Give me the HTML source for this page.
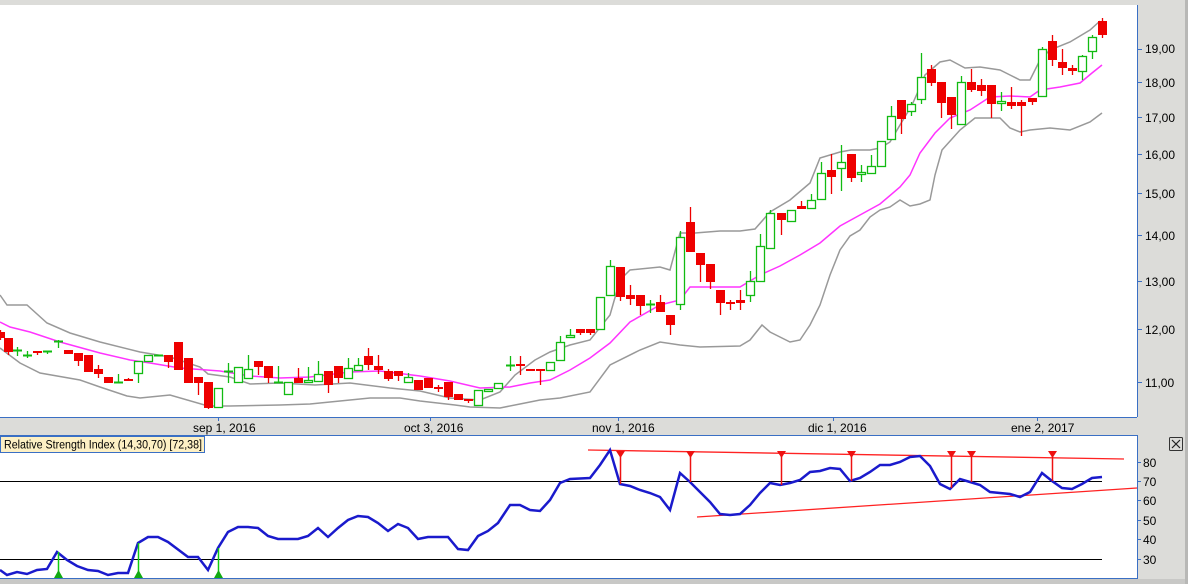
<!DOCTYPE html>
<html><head><meta charset="utf-8"><style>
html,body{margin:0;padding:0;background:#dcdcd9;}
body{width:1188px;height:584px;overflow:hidden;position:relative;font-family:"Liberation Sans",sans-serif;}
svg{position:absolute;left:0;top:0;}
text{font-family:"Liberation Sans",sans-serif;font-size:12px;fill:#000;}
</style></head><body>
<svg id="s" width="1188" height="584" xmlns="http://www.w3.org/2000/svg">
<rect x="0" y="0" width="1188" height="584" fill="#dcdcd9"/>
<rect x="1185" y="0" width="3" height="584" fill="#b8b8b6"/>
<rect x="0" y="5" width="1137" height="412" fill="#fff"/>
<line x1="1137.5" y1="5" x2="1137.5" y2="417" stroke="#3a6fc4"/>
<line x1="0" y1="417.5" x2="1137" y2="417.5" stroke="#3a6fc4"/>
<rect x="0" y="436" width="1137" height="142" fill="#fff"/>
<rect x="-1" y="435.5" width="1138.5" height="143" fill="none" stroke="#3a6fc4"/>
<rect x="0" y="579" width="1185" height="5" fill="#c8c8c6"/>
<g id="g"></g>
<g font-size="12">
<text x="1145" y="53">19,00</text><text x="1145" y="87">18,00</text><text x="1145" y="122">17,00</text><text x="1145" y="159">16,00</text><text x="1145" y="198">15,00</text><text x="1145" y="240">14,00</text><text x="1145" y="286">13,00</text><text x="1145" y="334">12,00</text><text x="1145" y="387">11,00</text>
<text x="193" y="432">sep 1, 2016</text><text x="404" y="432">oct 3, 2016</text><text x="592" y="432">nov 1, 2016</text><text x="808" y="432">dic 1, 2016</text><text x="1011" y="432">ene 2, 2017</text>
<text x="1143" y="467">80</text><text x="1143" y="486">70</text><text x="1143" y="505">60</text><text x="1143" y="525">50</text><text x="1143" y="544">40</text><text x="1143" y="564">30</text>
</g>
<rect x="0.5" y="436.5" width="204" height="16" fill="#fdf0c4" stroke="#3a6fc4"/>
<text x="4" y="448.5" font-size="11.5" textLength="198" lengthAdjust="spacingAndGlyphs" style="font-size:11.5px">Relative Strength Index (14,30,70) [72,38]</text>
<rect x="1169.5" y="437.5" width="13" height="13" fill="#dcdcd9" stroke="#333" rx="1"/>
<path d="M1172 440 L1180 448 M1180 440 L1172 448" stroke="#222" stroke-width="1.2"/>
</svg>
<script>
var g=document.getElementById('g'),NS='http://www.w3.org/2000/svg';
function el(t,a){var e=document.createElementNS(NS,t);for(var k in a)e.setAttribute(k,a[k]);g.appendChild(e);return e;}
function pl(p,c,w){el('polyline',{points:p.map(function(q){return q.join(',')}).join(' '),fill:'none',stroke:c,'stroke-width':w});}
[[218],[430],[618],[833],[1037]].forEach(function(t){el('line',{x1:t[0]+.5,y1:417,x2:t[0]+.5,y2:421,stroke:'#3a6fc4'})});
[49,82,117,154,193,235,281,329,382].forEach(function(y){el('line',{x1:1137,y1:y+.5,x2:1142,y2:y+.5,stroke:'#3a6fc4'})});
[462,481,500,520,539,559].forEach(function(y){el('line',{x1:1137,y1:y+.5,x2:1141,y2:y+.5,stroke:'#3a6fc4'})});
pl([[0,295],[7,305],[27,305],[47,323],[70,333],[100,342],[140,352],[170,357],[200,367],[208,374],[230,377],[250,384],[280,383],[315,385],[350,383],[390,388],[420,391],[450,398],[480,400],[500,392],[515,375],[535,360],[550,352],[570,345],[590,340],[610,315],[620,280],[630,270],[660,267],[670,270],[680,233],[695,233],[720,231],[740,231],[755,229],[770,212],[790,200],[810,183],[820,158],[840,152],[851,150],[870,150],[880,148],[890,142],[900,125],[912,105],[920,87],[925,75],[940,62],[950,60],[965,68],[980,67],[1000,70],[1010,75],[1020,80],[1030,80],[1040,60],[1050,50],[1070,42],[1090,30],[1100,21]],'#999',1.5);
pl([[0,348],[20,363],[40,373],[80,380],[100,387],[127,396],[140,398],[170,395],[208,406],[230,406],[280,405],[310,404],[340,401],[370,398],[400,398],[420,401],[455,405],[470,407],[500,408],[520,404],[540,400],[560,398],[590,392],[610,365],[640,350],[660,342],[680,345],[700,347],[740,346],[750,340],[762,325],[770,332],[790,342],[800,340],[810,325],[820,305],[830,275],[840,250],[850,236],[860,230],[870,217],[880,210],[890,207],[900,200],[910,206],[920,204],[930,200],[935,175],[942,150],[960,130],[975,118],[1000,118],[1010,128],[1020,132],[1030,130],[1050,128],[1070,130],[1090,122],[1102,113]],'#999',1.5);
pl([[0,322],[10,327],[30,332],[60,342],[100,353],[130,360],[150,363],[180,368],[220,371],[250,376],[280,378],[310,377],[350,372],[380,371],[420,376],[450,381],[480,388],[510,387],[530,383],[550,380],[570,370],[590,358],[610,343],[630,322],[660,305],[680,300],[690,287],[740,287],[760,275],[780,266],[800,255],[820,243],[840,226],[860,215],[880,204],[900,187],[910,175],[920,153],[935,133],[950,118],[970,110],[990,97],[1010,96],[1030,97],[1040,90],[1060,87],[1080,83],[1092,73],[1102,65]],'#ff33ff',1.5);
var C=[[0,332,338,330,340,'r'],[8,338,352,338,355,'r'],[17,350,351,347,356,'d'],[27,355,356,351,358,'d'],[37,351,353,351,355,'r'],[47,351,352,351,354,'d'],[58,341,342,340,348,'d'],[68,350,354,350,354,'r'],[78,353,361,353,366,'r'],[88,355,372,355,372,'r'],[98,369,374,365,378,'r'],[108,377,383,377,383,'r'],[118,382,383,374,383,'d'],[128,379,381,378,381,'r'],[138,361,373,361,383,'g'],[148,355,361,355,361,'g'],[158,355,356,355,356,'d'],[168,355,362,355,368,'r'],[178,342,370,342,370,'r'],[188,358,383,358,383,'r'],[198,377,383,377,395,'r'],[208,382,408,382,409,'r'],[218,388,407,388,407,'g'],[228,371,372,363,383,'d'],[238,367,382,367,382,'g'],[248,369,378,355,378,'g'],[258,361,367,361,375,'r'],[268,366,378,366,383,'r'],[278,382,383,366,383,'d'],[288,382,394,382,394,'g'],[298,378,383,368,383,'r'],[308,380,382,367,382,'g'],[318,374,381,361,381,'g'],[328,371,385,371,393,'r'],[338,366,378,366,383,'r'],[348,368,378,358,378,'g'],[358,365,370,358,370,'g'],[368,356,365,348,370,'r'],[378,366,370,355,374,'r'],[388,371,379,369,381,'r'],[398,371,376,371,381,'r'],[408,377,382,373,382,'g'],[418,380,390,380,390,'r'],[428,378,388,378,388,'r'],[438,387,389,385,392,'r'],[448,382,397,382,400,'r'],[458,394,400,394,400,'r'],[468,399,401,399,403,'r'],[478,390,405,390,405,'g'],[488,389,391,389,391,'g'],[498,383,388,383,388,'g'],[510,365,366,356,371,'d'],[520,364,366,356,375,'r'],[530,369,370,369,370,'r'],[540,369,371,369,385,'r'],[550,362,370,362,370,'g'],[560,342,360,336,360,'g'],[570,335,337,329,337,'g'],[580,329,333,329,335,'r'],[590,329,333,329,335,'r'],[600,297,329,297,329,'g'],[610,266,295,260,295,'g'],[620,267,297,267,301,'r'],[630,295,299,285,305,'r'],[640,295,306,295,315,'r'],[650,304,305,300,313,'d'],[660,302,312,295,312,'r'],[670,315,325,315,335,'r'],[680,237,304,231,310,'g'],[690,222,252,207,252,'r'],[700,253,265,253,282,'r'],[710,264,282,264,289,'r'],[720,290,303,290,315,'r'],[730,302,304,300,310,'r'],[740,300,303,290,310,'r'],[750,281,295,271,302,'g'],[760,246,281,234,281,'g'],[770,213,248,210,248,'g'],[781,213,220,213,235,'r'],[791,210,221,210,221,'g'],[801,206,209,201,209,'r'],[811,200,208,194,208,'g'],[821,173,199,162,199,'g'],[831,170,177,154,194,'r'],[841,162,168,145,191,'g'],[851,154,178,154,182,'r'],[861,172,174,165,182,'g'],[871,166,173,155,173,'g'],[881,141,166,141,166,'g'],[891,116,139,106,139,'g'],[901,100,119,100,134,'r'],[911,104,111,102,116,'g'],[921,77,99,53,104,'g'],[931,69,83,65,86,'r'],[941,82,103,82,118,'r'],[951,97,115,97,129,'r'],[961,82,124,76,124,'g'],[971,82,90,69,92,'r'],[981,85,91,79,96,'r'],[991,85,104,85,118,'r'],[1001,101,103,92,111,'g'],[1011,102,106,87,109,'r'],[1021,102,106,100,136,'r'],[1032,98,102,98,105,'r'],[1042,49,96,47,96,'g'],[1052,41,60,35,66,'r'],[1062,62,68,49,75,'r'],[1072,68,71,65,75,'r'],[1082,56,71,55,80,'g'],[1092,37,51,35,59,'g'],[1102,21,35,18,38,'r']];
C.forEach(function(c){var x=c[0],t=c[5];var col=t=='r'?'#ee0000':'#11bb11';
el('line',{x1:x+.5,y1:c[3],x2:x+.5,y2:c[4],stroke:col,'stroke-width':1.3});
if(t=='r')el('rect',{x:x-4,y:c[1],width:9,height:Math.max(2,c[2]-c[1]),fill:col});
else if(t=='g')el('rect',{x:x-3.5,y:c[1]+.5,width:8,height:Math.max(1,c[2]-c[1]),fill:'#fff',stroke:col,'stroke-width':1.3});
else el('line',{x1:x-4,y1:c[1]+.5,x2:x+5,y2:c[1]+.5,stroke:col,'stroke-width':2});});
el('line',{x1:0,y1:481.5,x2:1102,y2:481.5,stroke:'#000'});
el('line',{x1:0,y1:559.5,x2:1102,y2:559.5,stroke:'#000'});
el('line',{x1:588,y1:450,x2:1124,y2:459,stroke:'#f22','stroke-width':1.3});
el('line',{x1:697,y1:517,x2:1137,y2:488,stroke:'#f22','stroke-width':1.3});
var R=[[0,570],[7,575],[17,572],[27,574],[37,570],[47,569],[57,552],[67,560],[77,566],[88,570],[98,571],[108,575],[118,573],[128,573],[138,543],[148,537],[158,537],[168,542],[188,557],[198,557],[208,570],[218,548],[228,532],[238,527],[248,527],[258,528],[268,536],[278,539],[298,539],[308,536],[318,528],[328,537],[338,528],[348,520],[358,516],[368,517],[378,523],[388,531],[398,524],[408,528],[418,539],[428,537],[448,537],[458,549],[468,550],[478,536],[488,531],[498,523],[510,505],[520,505],[530,510],[540,511],[550,500],[560,483],[570,479],[590,478],[600,465],[610,450],[620,484],[630,486],[640,490],[650,493],[660,497],[670,510],[680,473],[690,482],[700,492],[710,502],[720,514],[730,515],[740,514],[750,505],[760,493],[770,483],[780,485],[790,483],[800,480],[810,472],[820,471],[830,468],[840,469],[850,481],[860,478],[870,472],[880,465],[890,465],[900,462],[910,457],[920,456],[930,466],[940,484],[950,489],[960,479],[970,482],[980,485],[990,492],[1000,493],[1010,494],[1020,497],[1030,492],[1042,473],[1052,481],[1062,488],[1072,489],[1082,484],[1092,478],[1102,477]];
pl(R,'#1a1acc',2.5);
[[620,484],[690,482],[781,485],[851,481],[951,488],[971,482],[1052,481]].forEach(function(m){var x=m[0];
el('line',{x1:x+.5,y1:451,x2:x+.5,y2:m[1],stroke:'#ee1111','stroke-width':1.5});
el('path',{d:'M'+(x-4)+' 451 L'+(x+5)+' 451 L'+(x+.5)+' 458 Z',fill:'#ee1111'});});
[[58,552],[138,543],[218,548]].forEach(function(m){var x=m[0];
el('line',{x1:x+.5,y1:m[1],x2:x+.5,y2:578,stroke:'#11cc11','stroke-width':1.5});
el('path',{d:'M'+(x-4)+' 578 L'+(x+5)+' 578 L'+(x+.5)+' 570 Z',fill:'#11aa11'});});
</script>
</body></html>
